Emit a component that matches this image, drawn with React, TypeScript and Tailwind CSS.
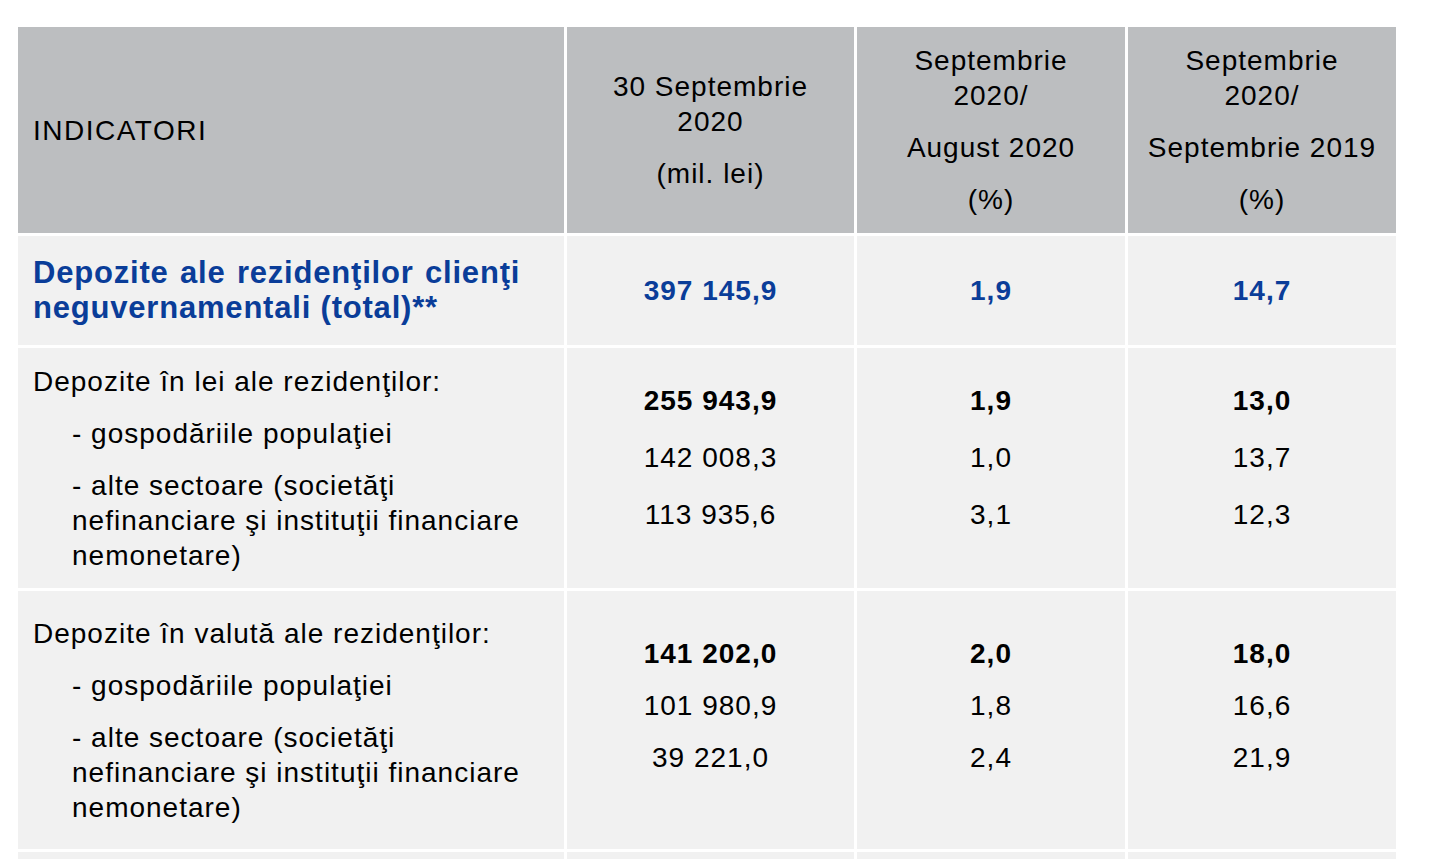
import React from "react";

const font = { fontFamily: "'Liberation Sans', Arial, Helvetica, sans-serif" };

function HeaderCell({ lines }: { lines: string[][] }) {
  return (
    <div className="bg-[#bcbec0] flex flex-col items-center justify-center gap-[17px] text-center text-[28px] leading-[35px] tracking-[1px] text-black">
      {lines.map((p, i) => (
        <div key={i}>
          {p.map((l, j) => (
            <div key={j}>{l}</div>
          ))}
        </div>
      ))}
    </div>
  );
}

function ValueCell({
  values,
  pt,
  gap,
}: {
  values: string[];
  pt: string;
  gap: string;
}) {
  return (
    <div className={`bg-[#f1f1f1] flex flex-col items-center text-[28px] leading-[35px] tracking-[1px] text-black ${pt} ${gap}`}>
      {values.map((v, i) => (
        <div key={i} className={i === 0 ? "font-bold" : ""}>
          {v}
        </div>
      ))}
    </div>
  );
}

function LabelCell({ title, items }: { title: string; items: string[][] }) {
  return (
    <div className="bg-[#f1f1f1] flex flex-col justify-center gap-[17px] pl-[15px] text-[28px] leading-[35px] tracking-[1px] text-black">
      <div>{title}</div>
      {items.map((p, i) => (
        <div key={i} className="pl-[39px]">
          {p.map((l, j) => (
            <div key={j}>{l}</div>
          ))}
        </div>
      ))}
    </div>
  );
}

export default function App() {
  return (
    <div className="w-[1433px] h-[859px] bg-white overflow-hidden" style={font}>
      <div className="pl-[18px] pt-[27px]">
        <div className="grid grid-cols-[546px_287px_268px_268px] grid-rows-[206px_109px_240px_258px_60px] gap-[3px] w-[1378px]">
          {/* Header */}
          <div className="bg-[#bcbec0] flex items-center pl-[15px] text-[28px] leading-[35px] tracking-[1.5px] text-black">
            INDICATORI
          </div>
          <HeaderCell lines={[["30 Septembrie", "2020"], ["(mil. lei)"]]} />
          <HeaderCell lines={[["Septembrie", "2020/"], ["August 2020"], ["(%)"]]} />
          <HeaderCell lines={[["Septembrie", "2020/"], ["Septembrie 2019"], ["(%)"]]} />

          {/* Total row */}
          <div className="bg-[#f1f1f1] flex flex-col justify-center pl-[15px] pb-[2px] text-[31px] leading-[35px] tracking-[0.8px] font-bold text-[#0a3d99]">
            <div className="[word-spacing:2px]">Depozite ale rezidenţilor clienţi</div>
            <div>neguvernamentali (total)**</div>
          </div>
          <div className="bg-[#f1f1f1] flex items-center justify-center text-[28px] tracking-[1px] font-bold text-[#0a3d99]">
            397 145,9
          </div>
          <div className="bg-[#f1f1f1] flex items-center justify-center text-[28px] tracking-[1px] font-bold text-[#0a3d99]">
            1,9
          </div>
          <div className="bg-[#f1f1f1] flex items-center justify-center text-[28px] tracking-[1px] font-bold text-[#0a3d99]">
            14,7
          </div>

          {/* Lei row */}
          <LabelCell
            title="Depozite în lei ale rezidenţilor:"
            items={[
              ["- gospodăriile populaţiei"],
              ["- alte sectoare (societăţi", "nefinanciare şi instituţii financiare", "nemonetare)"],
            ]}
          />
          <ValueCell values={["255 943,9", "142 008,3", "113 935,6"]} pt="pt-[35px]" gap="gap-[22px]" />
          <ValueCell values={["1,9", "1,0", "3,1"]} pt="pt-[35px]" gap="gap-[22px]" />
          <ValueCell values={["13,0", "13,7", "12,3"]} pt="pt-[35px]" gap="gap-[22px]" />

          {/* Valuta row */}
          <LabelCell
            title="Depozite în valută ale rezidenţilor:"
            items={[
              ["- gospodăriile populaţiei"],
              ["- alte sectoare (societăţi", "nefinanciare şi instituţii financiare", "nemonetare)"],
            ]}
          />
          <ValueCell values={["141 202,0", "101 980,9", "39 221,0"]} pt="pt-[45px]" gap="gap-[17px]" />
          <ValueCell values={["2,0", "1,8", "2,4"]} pt="pt-[45px]" gap="gap-[17px]" />
          <ValueCell values={["18,0", "16,6", "21,9"]} pt="pt-[45px]" gap="gap-[17px]" />

          {/* Next row (partially visible) */}
          <div className="bg-[#f1f1f1]" />
          <div className="bg-[#f1f1f1]" />
          <div className="bg-[#f1f1f1]" />
          <div className="bg-[#f1f1f1]" />
        </div>
      </div>
    </div>
  );
}
